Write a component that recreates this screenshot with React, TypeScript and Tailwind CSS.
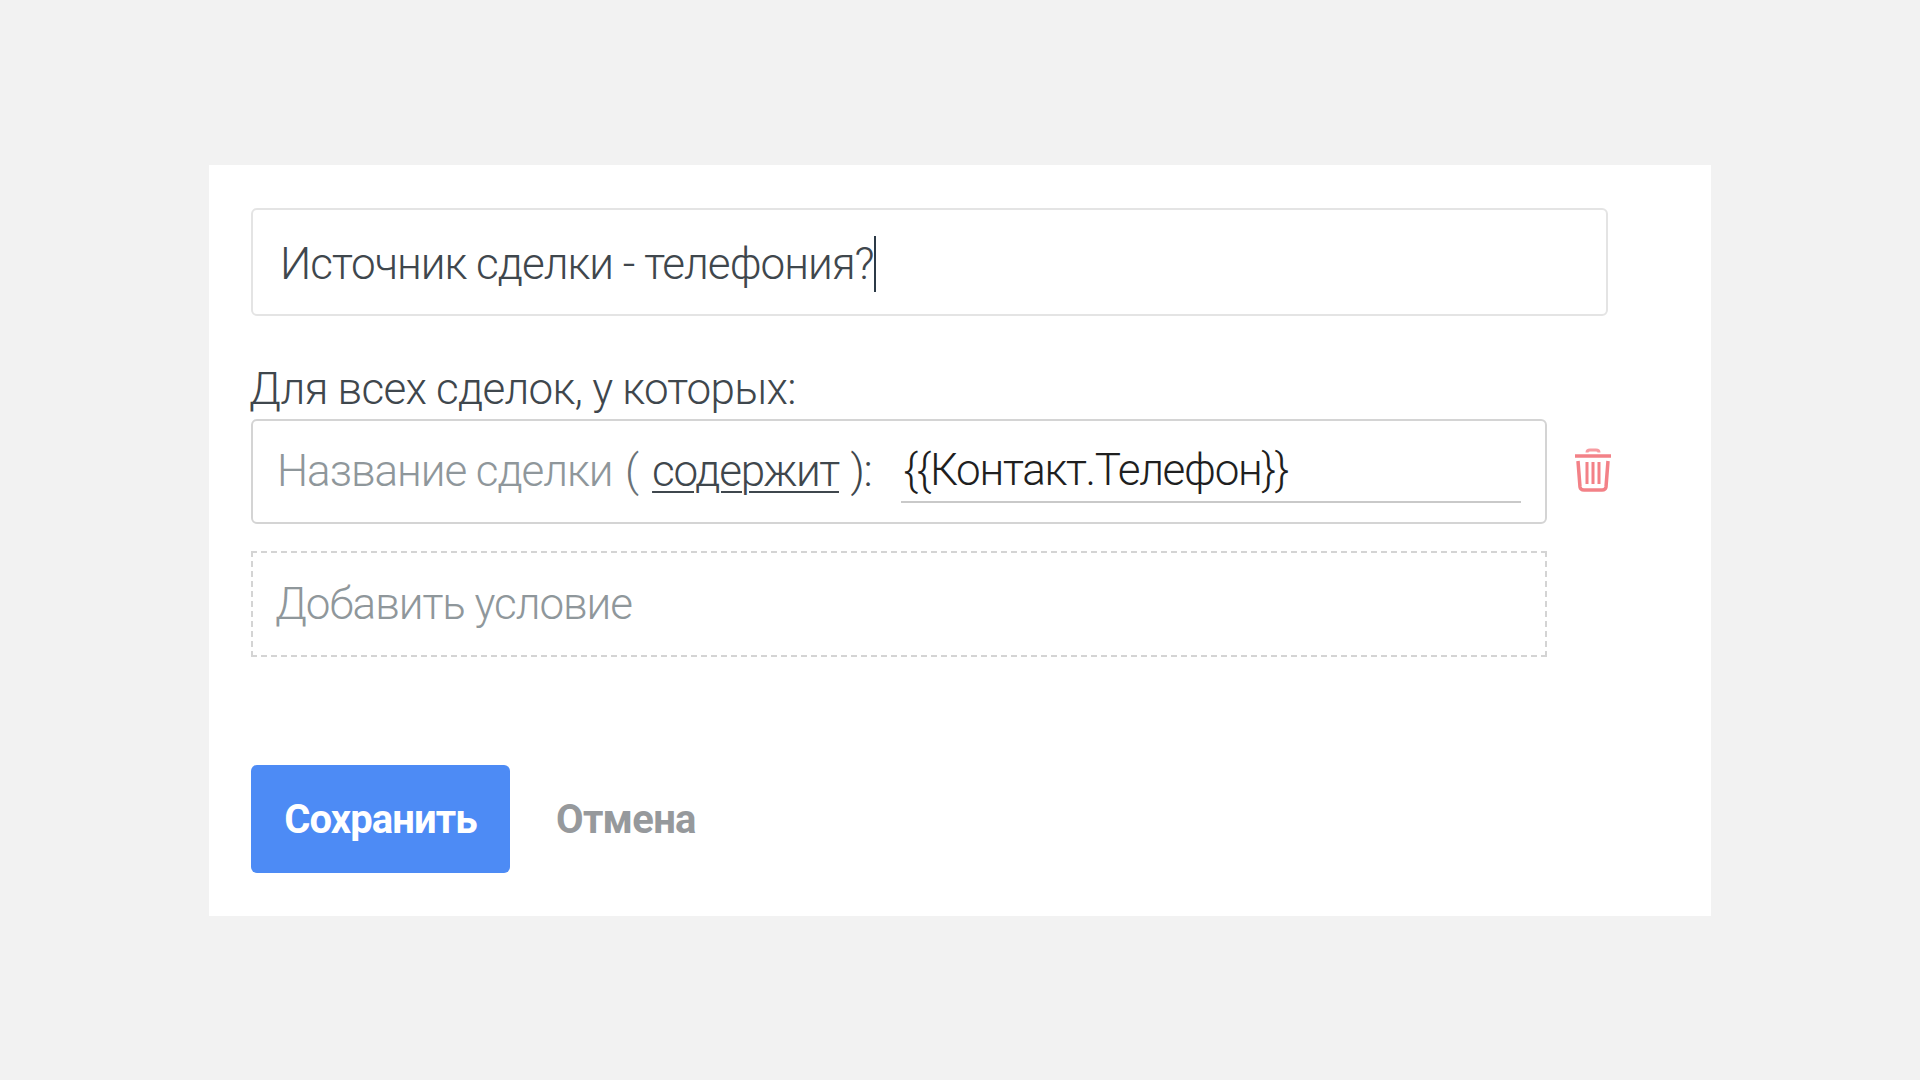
const font = "font-['Roboto',sans-serif]";

function TrashIcon() {
    return (
        <svg width="38" height="44" viewBox="0 0 38 44" fill="none" className="shrink-0 opacity-70">
            <path d="M13 4.5 Q13 2 16 2 H22 Q25 2 25 4.5" stroke="#f4727a" strokeWidth="3" />
            <path d="M1 8 H37" stroke="#ee4c55" strokeWidth="3.5" />
            <path d="M4 13 L6 39 Q6.5 42 10 42 H28 Q31.500 42 32 39 L34 13" stroke="#ee4c55" strokeWidth="3.5" />
            <path d="M13 14 V36 M19 14 V36 M25 14 V36" stroke="#ee4c55" strokeWidth="3" />
        </svg>
    );
}

export default function App() {
    return (
        <div className={`${font} min-h-screen bg-[#f2f2f2] flex items-center justify-center`}>
            <div className="w-[1502px] h-[751px] bg-white pl-[42px] pt-[43px] flex flex-col">

                {/* Title */}
                <div className="w-[1357px] h-[108px] border-2 border-[#e4e4e4] rounded-[6px] flex items-center pl-[27px] pt-[4px] text-[44px] font-light tracking-[-1px] text-[#3f474d]">
                    <span>Источник сделки - телефония?</span>
                    <span className="w-[2px] h-[56px] bg-[#2c3a47]"></span>
                </div>

                <div className="mt-[46px] h-[57px] text-[44px] font-light leading-[54px] tracking-[-0.75px] text-[#3f474d] -ml-[2px]">Для всех сделок, у которых:</div>

                {/* Condition */}
                <div className="flex items-center">
                    <div className="w-[1296px] h-[105px] border-2 border-[#d4d4d4] rounded-[6px] flex items-center pl-[24px] pr-[24px] text-[44px] font-light tracking-[-1.3px]">
                        <span className="text-[#8f979b] tracking-[-1.05px] whitespace-pre">Название сделки</span>
                        <span className="ml-[3px] text-[#6b7378] whitespace-pre"> ( </span>
                        <span className="ml-[5px] text-[#3f474d] underline underline-offset-[5px] decoration-2">содержит</span>
                        <span className="ml-[2px] text-[#3f474d] whitespace-pre"> ):</span>
                        <div className="ml-[30px] flex-1 h-[64px] border-b-2 border-[#c9c9c9] text-[#1f1f1f] pl-[2px] leading-[62px]">{"{{Контакт.Телефон}}"}</div>
                    </div>
                    <div className="ml-[27px] -mt-[2px]">
                        <TrashIcon />
                    </div>
                </div>

                <div className="mt-[27px] w-[1296px] h-[106px] border-2 border-dashed border-[#d4d4d4] flex items-center pl-[22px] text-[44px] font-light tracking-[-1.05px] text-[#8f979b]">
                    Добавить условие
                </div>

                {/* Actions */}
                <div className="mt-[108px] flex items-center">
                    <button className="w-[259px] h-[108px] pt-[3px] rounded-[6px] bg-[#4d8bf5] text-white text-[40px] font-bold tracking-[-0.9px]">Сохранить</button>
                    <span className="ml-[46px] pt-[3px] text-[40px] font-bold tracking-[-0.7px] text-[#96999c]">Отмена</span>
                </div>
            </div>
        </div>
    );
}
